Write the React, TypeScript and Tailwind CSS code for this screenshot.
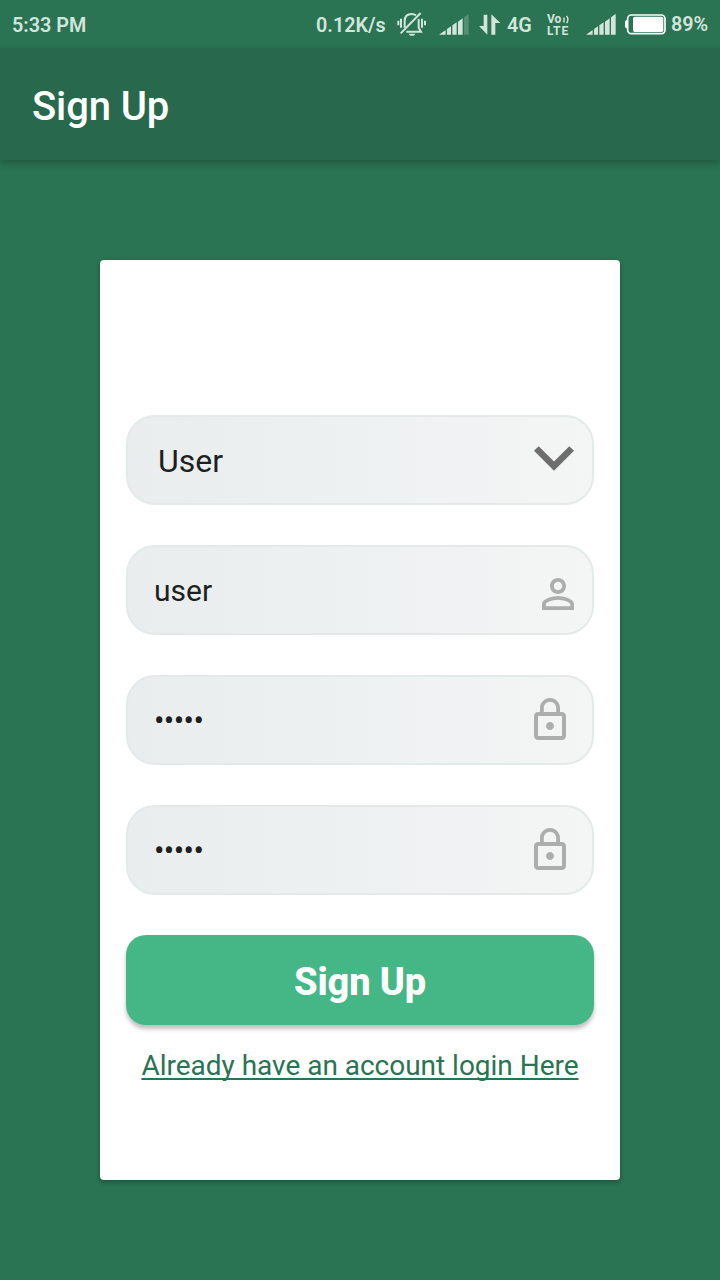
import type { ReactNode } from "react";

function BellOffIcon() {
  return (
    <svg className="mt-[11px] h-[26px] w-[30px] shrink-0" viewBox="0 0 90 78" fill="none" stroke="#d3e5db" strokeWidth="6">
      <path d="M23 50V30C23 16 31 9 44 9c6 0 9 1 13 4M65 24V50l7 12H28" />
      <path d="M11 67 71 6" />
      <path d="M35 68h20c-2 5-5 6-10 6s-8-1-10-6z" fill="#d3e5db" stroke="none" />
      <path d="M4 29v14M12 23v27M75 23v27M84 29v14" strokeWidth="6" />
    </svg>
  );
}

function SignalIcon({ weak = false }: { weak?: boolean }) {
  return (
    <svg className="mt-[14px] h-[21px] w-[30px] shrink-0" viewBox="0 0 90 63" fill="#d3e5db">
      <path d="M0 62 20 48V62zM24 45 36 37V62H24zM40 34 53 25V62H40zM57 23 71 13V62H57z" />
      <path d="M75 10 89 0V62H75z" opacity={weak ? 0.25 : 1} />
    </svg>
  );
}

function DataArrowsIcon() {
  return (
    <svg className="mt-[14px] h-[21px] w-[22px] shrink-0" viewBox="0 0 66 63" fill="#d3e5db">
      <path d="M14 2H25V62L0 36H14zM37 62V1L64 27H49V62z" />
    </svg>
  );
}

function VolteIcon() {
  return (
    <div className="mt-[13px] w-[24px] shrink-0 font-bold">
      <div className="flex h-[12px] items-center text-[12px] leading-[12px]">
        <span className="w-[15px]">Vo</span>
        <svg className="h-[9px] w-[8px]" viewBox="0 0 8 9" fill="none" stroke="#d3e5db" strokeWidth="1.4">
          <path d="M2 2.4v5M4.6 .8q2.6 3.8 0 7.4" />
        </svg>
      </div>
      <div className="text-[12px] leading-[12px] tracking-[0.9px]">LTE</div>
    </div>
  );
}

function BatteryIcon() {
  return (
    <svg className="mt-[14px] h-[21px] w-[41px] shrink-0" viewBox="0 0 123 63">
      <rect x="8" y="3" width="112" height="56" rx="11" fill="none" stroke="#fff" strokeWidth="5" />
      <path d="M6 18v25c-4 0-6-3-6-7V25c0-4 2-7 6-7z" fill="#fff" />
      <rect x="24" y="8" width="91" height="46" rx="5" fill="#fff" />
    </svg>
  );
}

function PersonIcon() {
  return (
    <svg className="mt-[8px] mr-[10px] size-12" viewBox="0 0 24 24" fill="#adadad">
      <path d="M12 5.9c1.16 0 2.1.94 2.1 2.1s-.94 2.1-2.1 2.1S9.9 9.16 9.9 8s.94-2.1 2.1-2.1m0 9c2.97 0 6.1 1.46 6.1 2.1v1.1H5.9V17c0-.64 3.13-2.1 6.1-2.1M12 4C9.79 4 8 5.79 8 8s1.79 4 4 4 4-1.79 4-4-1.79-4-4-4zm0 9c-2.67 0-8 1.34-8 4v3h16v-3c0-2.66-5.33-4-8-4z" />
    </svg>
  );
}

function LockIcon() {
  return (
    <svg className="mr-[18px] size-12" viewBox="0 0 24 24" fill="#adadad">
      <path d="M12 17c1.1 0 2-.9 2-2s-.9-2-2-2-2 .9-2 2 .9 2 2 2zm6-9h-1V6c0-2.76-2.24-5-5-5S7 3.24 7 6v2H6c-1.1 0-2 .9-2 2v10c0 1.1.9 2 2 2h12c1.1 0 2-.9 2-2V10c0-1.1-.9-2-2-2zM8.9 6c0-1.71 1.39-3.1 3.1-3.1s3.1 1.39 3.1 3.1v2H8.9V6zM18 20H6V10h12v10z" />
    </svg>
  );
}

function ChevronIcon() {
  return (
    <svg className="mr-[18px] mb-[3px] h-[25px] w-[40px]" viewBox="6 8.59 12 7.41" fill="#6e6e6e">
      <path d="M7.41 8.59 12 13.17l4.59-4.58L18 10l-6 6-6-6z" />
    </svg>
  );
}

function Field({ children }: { children: ReactNode }) {
  return (
    <div className="flex h-[90px] items-center justify-between rounded-[29px] border-2 border-[#e4eaea] bg-linear-to-r from-[#e9edee] via-[#eef1f2] to-[#f4f6f5] bg-origin-border text-[#1d1f20]">
      {children}
    </div>
  );
}

function MaskedValue() {
  return <span className="pt-0.5 pl-[26px] text-[31px] tracking-[-0.6px]">•••••</span>;
}

export default function App() {
  return (
    <div className="flex h-[1280px] w-[720px] flex-col overflow-hidden bg-[#2a7353] font-['Roboto',sans-serif]">
      <div className="flex h-12 shrink-0 pl-3 text-[19.8px] leading-[51px] font-semibold whitespace-nowrap text-[#d3e5db]">
        <div className="w-[304px] shrink-0">5:33 PM</div>
        <div className="w-[81px] shrink-0">0.12K/s</div>
        <BellOffIcon />
        <div className="w-3 shrink-0" />
        <SignalIcon weak />
        <div className="w-[10px] shrink-0" />
        <DataArrowsIcon />
        <div className="ml-[6px] w-[40px] shrink-0">4G</div>
        <VolteIcon />
        <div className="w-[15px] shrink-0" />
        <SignalIcon />
        <div className="w-[9px] shrink-0" />
        <BatteryIcon />
        <div className="ml-[5px] shrink-0 leading-[50px]">89%</div>
      </div>
      <header className="flex h-28 shrink-0 items-center bg-[#28694d] pt-1.5 pl-8 text-[40px] font-medium tracking-[-0.1px] text-white shadow-[0_3px_7px_rgba(0,0,0,0.25)]">
        Sign Up
      </header>
      <main className="mx-[100px] mt-[100px] flex h-[920px] flex-col rounded-[4px] bg-white px-[26px] pt-[155px] shadow-[0_2px_5px_rgba(0,0,0,0.3)]">
        <div className="flex flex-col gap-10">
          <Field>
            <span className="pt-0.5 pl-[30px] text-[32px]">User</span>
            <ChevronIcon />
          </Field>
          <Field>
            <span className="pl-[26px] text-[30px]">user</span>
            <PersonIcon />
          </Field>
          <Field>
            <MaskedValue />
            <LockIcon />
          </Field>
          <Field>
            <MaskedValue />
            <LockIcon />
          </Field>
          <button className="h-[90px] rounded-[20px] bg-[#45b787] pt-1 text-[38px] font-extrabold tracking-[-0.15px] text-white shadow-[0_4px_4px_rgba(0,0,0,0.25)]">
            Sign Up
          </button>
        </div>
        <a className="mt-[21px] self-center text-[28px] leading-[40px] tracking-[-0.02px] whitespace-nowrap text-[#2a7353] underline decoration-2 underline-offset-[3px] [text-decoration-skip-ink:none]">
          Already have an account login Here
        </a>
      </main>
    </div>
  );
}
